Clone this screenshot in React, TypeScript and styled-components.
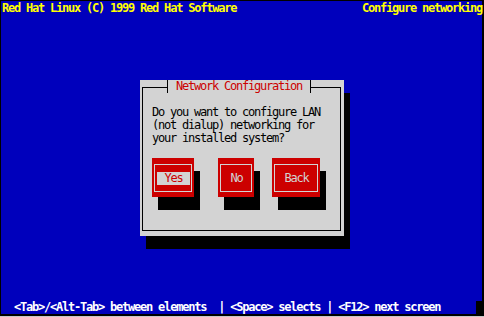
import styled, { createGlobalStyle } from "styled-components";

const BLUE = "#0000bc";
const GRAY = "#d3d3d3";
const RED = "#cc0000";
const CELL_W = 6;
const CELL_H = 13;

const GlobalStyle = createGlobalStyle`
  html, body {
    margin: 0;
    padding: 0;
    background: #000;
  }
  body {
    font-family: "DejaVu Sans Mono", "Liberation Mono", monospace;
    font-size: 12px;
    letter-spacing: -1.22px;
    line-height: 13px;
  }
`;

const Monitor = styled.div`
  width: 484px;
  height: 317px;
  box-sizing: border-box;
  padding: 1px 0 0 1px;
  background: #000;
  border-bottom: 1px solid #c8c8c8;
`;

const Screen = styled.div`
  position: relative;
  width: 481px;
  height: 313px;
  box-sizing: border-box;
  padding: 1px 0 0 1px;
  background: ${BLUE};
  display: flex;
  flex-direction: column;
  justify-content: space-between;
`;

const TopBar = styled.div`
  height: ${CELL_H}px;
  display: flex;
  justify-content: space-between;
  color: #ffff00;
  font-weight: bold;
  white-space: pre;
`;

const StatusBar = styled.div`
  height: ${CELL_H}px;
  display: flex;
  color: #ffffff;
  font-weight: bold;
  white-space: pre;
`;

const StatusText = styled.span`
  flex: 1;
`;

const CornerCell = styled.span`
  width: ${CELL_W}px;
  background: #000;
`;

const Window = styled.div<{ col: number; row: number; cols: number; rows: number }>`
  position: absolute;
  left: ${({ col }) => col * CELL_W + 1}px;
  top: ${({ row }) => row * CELL_H + 1}px;
  width: ${({ cols }) => cols * CELL_W}px;
  height: ${({ rows }) => rows * CELL_H}px;
  box-sizing: border-box;
  padding: 7px 3px 5px 2px;
  background: ${GRAY};
  box-shadow: ${CELL_W}px ${CELL_H}px 0 #000;
  display: flex;
`;

const Frame = styled.div`
  position: relative;
  flex: 1;
  border: 1px solid #000;
  padding: 18px 0 0 9px;
`;

const Title = styled.div`
  position: absolute;
  top: -8px;
  left: 24px;
  height: ${CELL_H}px;
  padding: 0 8px;
  border-left: 1px solid #000;
  border-right: 1px solid #000;
  background: ${GRAY};
  color: ${RED};
  white-space: pre;
`;

const Message = styled.div`
  color: #000;
  white-space: pre;
`;

const ButtonRow = styled.div`
  display: flex;
  margin-top: ${CELL_H}px;
`;

const Button = styled.div<{ chars: number; offset: number }>`
  width: ${({ chars }) => (chars + 4) * CELL_W}px;
  height: ${CELL_H * 3}px;
  margin-left: ${({ offset }) => offset * CELL_W}px;
  box-sizing: border-box;
  padding: 6px 2px 5px 2px;
  background: ${RED};
  box-shadow: ${CELL_W}px ${CELL_H}px 0 #000;
  display: flex;
`;

const ButtonFrame = styled.div`
  flex: 1;
  border: 1px solid ${GRAY};
  display: flex;
  align-items: center;
`;

const ButtonLabel = styled.span<{ focused?: boolean }>`
  flex: 1;
  height: ${CELL_H}px;
  margin: 0 1px 0 2px;
  text-align: center;
  background: ${({ focused }) => (focused ? GRAY : "transparent")};
  color: ${({ focused }) => (focused ? RED : GRAY)};
`;

const buttons = [
  { label: "Yes", offset: 0, focused: true },
  { label: "No", offset: 4 },
  { label: "Back", offset: 3 },
];

export default function App() {
  return (
    <>
      <GlobalStyle />
      <Monitor>
        <Screen>
          <TopBar>
            <span>Red Hat Linux (C) 1999 Red Hat Software</span>
            <span>Configure networking</span>
          </TopBar>

          <Window col={23} row={6} cols={34} rows={12}>
            <Frame>
              <Title>Network Configuration</Title>
              <Message>
                {"Do you want to configure LAN\n(not dialup) networking for\nyour installed system?"}
              </Message>
              <ButtonRow>
                {buttons.map((b) => (
                  <Button key={b.label} chars={b.label.length} offset={b.offset}>
                    <ButtonFrame>
                      <ButtonLabel focused={b.focused}>{b.label}</ButtonLabel>
                    </ButtonFrame>
                  </Button>
                ))}
              </ButtonRow>
            </Frame>
          </Window>

          <StatusBar>
            <StatusText>
              {"  <Tab>/<Alt-Tab> between elements  | <Space> selects | <F12> next screen"}
            </StatusText>
            <CornerCell />
          </StatusBar>
        </Screen>
      </Monitor>
    </>
  );
}
